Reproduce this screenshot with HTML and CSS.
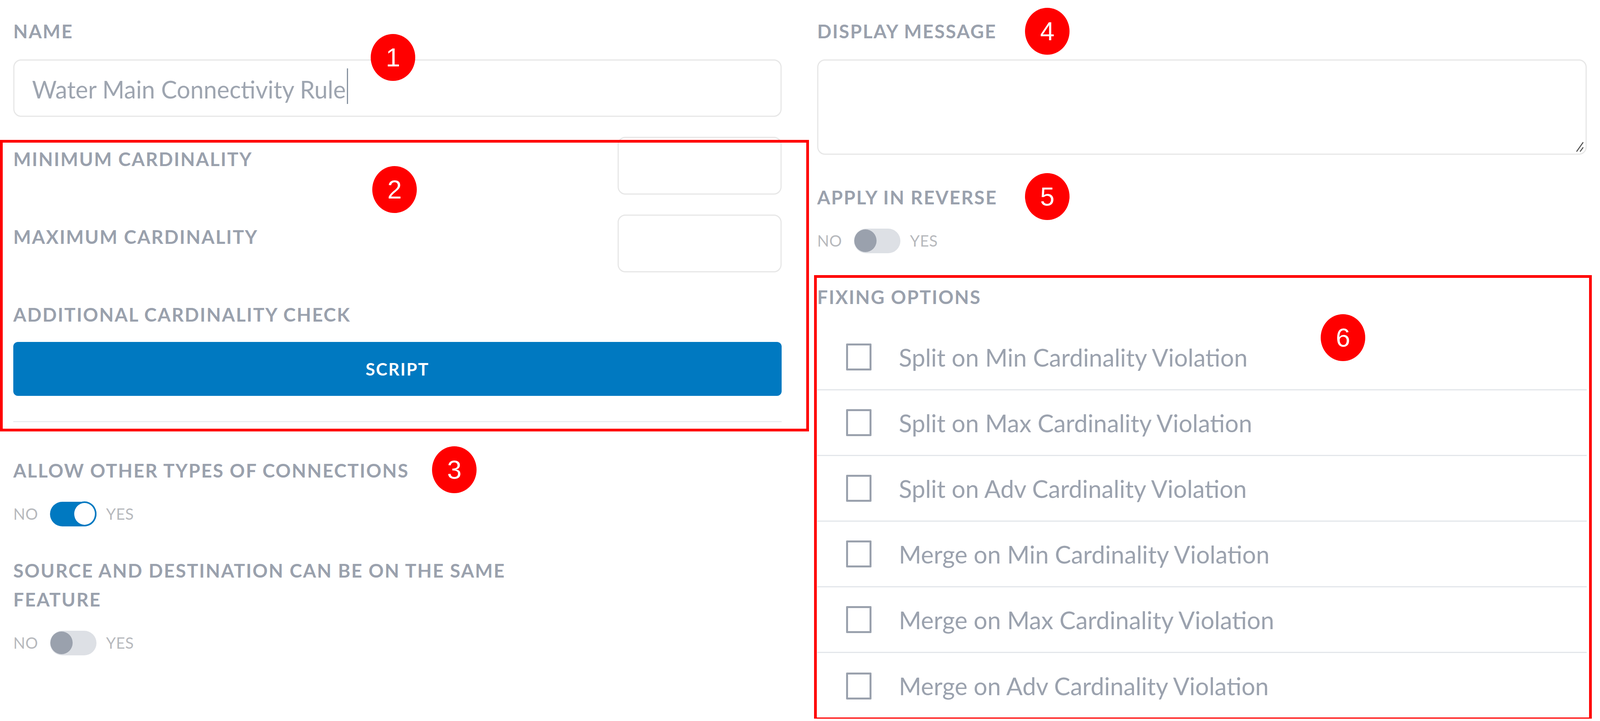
FILE: index.html
```html
<!DOCTYPE html>
<html lang="en">
<head>
<meta charset="utf-8">
<title>Connectivity Rule</title>
<link rel="stylesheet" href="styles.css">
</head>
<body>
<div class="page">
  <div class="col col-left">
    <div class="label">NAME</div>
    <div class="text-input name-input"><span class="value">Water Main Connectivity Rule</span><span class="caret"></span></div>

    <section class="cardinality">
      <div class="card-row">
        <div class="label">MINIMUM CARDINALITY</div>
        <div class="text-input small-input"></div>
      </div>
      <div class="card-row second">
        <div class="label">MAXIMUM CARDINALITY</div>
        <div class="text-input small-input"></div>
      </div>
      <div class="label additional">ADDITIONAL CARDINALITY CHECK</div>
      <button class="script-btn">SCRIPT</button>
      <div class="divider"></div>
      <div class="annot-box box-two"></div>
    </section>

    <div class="label after-divider">ALLOW OTHER TYPES OF CONNECTIONS</div>
    <div class="toggle-row">
      <span class="tog-text">NO</span>
      <span class="toggle on"><span class="knob"></span></span>
      <span class="tog-text yes">YES</span>
    </div>

    <div class="label wrap-label">SOURCE AND DESTINATION CAN BE ON THE SAME FEATURE</div>
    <div class="toggle-row">
      <span class="tog-text">NO</span>
      <span class="toggle"><span class="knob"></span></span>
      <span class="tog-text yes">YES</span>
    </div>

    <div class="badge b1">1</div>
    <div class="badge b2">2</div>
    <div class="badge b3">3</div>
  </div>

  <div class="col col-right">
    <div class="label">DISPLAY MESSAGE</div>
    <div class="textarea-wrap">
      <textarea class="message"></textarea>
      <svg class="grip" width="22" height="30" viewBox="0 0 22 30"><line x1="3" y1="28" x2="20" y2="4" stroke="#4a4a4a" stroke-width="2.5"/><line x1="12" y1="28" x2="20" y2="17" stroke="#4a4a4a" stroke-width="2.5"/></svg>
    </div>

    <div class="label reverse-label">APPLY IN REVERSE</div>
    <div class="toggle-row">
      <span class="tog-text">NO</span>
      <span class="toggle"><span class="knob"></span></span>
      <span class="tog-text yes">YES</span>
    </div>

    <section class="fixing">
      <div class="label">FIXING OPTIONS</div>
      <ul class="options">
        <li class="option"><span class="checkbox"></span><span class="opt-text">Split on Min Cardinality Violation</span></li>
        <li class="option"><span class="checkbox"></span><span class="opt-text">Split on Max Cardinality Violation</span></li>
        <li class="option"><span class="checkbox"></span><span class="opt-text">Split on Adv Cardinality Violation</span></li>
        <li class="option"><span class="checkbox"></span><span class="opt-text">Merge on Min Cardinality Violation</span></li>
        <li class="option"><span class="checkbox"></span><span class="opt-text">Merge on Max Cardinality Violation</span></li>
        <li class="option"><span class="checkbox"></span><span class="opt-text">Merge on Adv Cardinality Violation</span></li>
      </ul>
      <div class="annot-box box-six"></div>
    </section>

    <div class="badge b4">4</div>
    <div class="badge b5">5</div>
    <div class="badge b6">6</div>
  </div>
</div>
</body>
</html>
```

FILE: styles.css
```css
* { box-sizing: border-box; }

html, body {
  margin: 0;
  padding: 0;
  background: #ffffff;
}

body {
  font-family: Lato, "Open Sans", "Liberation Sans", sans-serif;
}

.page {
  width: 100%;
  display: grid;
  grid-template-columns: 1967fr 1970fr;
  column-gap: 91px;
  padding: 43px 34px 0 34px;
  align-items: start;
}

.col {
  position: relative;
  display: flex;
  flex-direction: column;
  min-width: 0;
}

.label {
  font-size: 48px;
  line-height: 74px;
  font-weight: 700;
  letter-spacing: 2.5px;
  color: #9aa1ad;
  text-transform: uppercase;
  white-space: nowrap;
}

.text-input {
  border: 3px solid #e7e7e7;
  border-radius: 20px;
  background: #ffffff;
}

.name-input {
  margin-top: 35px;
  height: 147px;
  display: flex;
  align-items: center;
  padding-left: 45px;
  font-size: 61px;
  color: #9ea5b0;
}

.name-input .value {
  padding-top: 6px;
}

.caret {
  display: inline-block;
  width: 3px;
  height: 91px;
  margin-left: 3px;
  margin-top: -10px;
  background: #8792a0;
}

.cardinality {
  position: relative;
  margin-top: 51px;
  display: flex;
  flex-direction: column;
}

.card-row {
  display: flex;
  justify-content: space-between;
  align-items: flex-start;
}

.card-row .label {
  margin-top: 20px;
}

.card-row.second {
  margin-top: 51px;
}

.small-input {
  width: 420px;
  height: 148px;
}

.additional {
  margin-top: 71px;
}

.script-btn {
  margin-top: 33px;
  height: 138px;
  width: 100%;
  border: none;
  border-radius: 12px;
  background: #0079c1;
  color: #ffffff;
  font-family: Lato, "Open Sans", "Liberation Sans", sans-serif;
  font-size: 44px;
  font-weight: 700;
  letter-spacing: 2.5px;
  padding: 0;
}

.divider {
  margin-top: 65px;
  height: 2px;
  background: #e3e5e9;
}

.after-divider {
  margin-top: 87px;
}

.toggle-row {
  margin-top: 42px;
  height: 64px;
  display: flex;
  align-items: center;
}

.tog-text {
  font-size: 40px;
  font-weight: 400;
  color: #b7b9bd;
  letter-spacing: 0.5px;
  margin-right: 30px;
}

.tog-text.yes {
  margin-right: 0;
  margin-left: 25px;
}

.toggle {
  width: 119px;
  height: 63px;
  border-radius: 32px;
  background: #dde0e5;
  display: inline-flex;
  align-items: center;
}

.toggle .knob {
  width: 57px;
  height: 58px;
  border-radius: 50%;
  background: #9aa1ad;
  margin-left: 1px;
}

.toggle.on {
  background: #0079c1;
  justify-content: flex-end;
}

.toggle.on .knob {
  width: 61px;
  height: 64px;
  margin-left: 0;
  background: #ffffff;
  border: 4px solid #0079c1;
}

.wrap-label {
  margin-top: 76px;
  white-space: normal;
  max-width: 1360px;
}

.textarea-wrap {
  position: relative;
  margin-top: 35px;
  height: 244px;
}

.message {
  display: block;
  width: 100%;
  height: 100%;
  border: 3px solid #e7e7e7;
  border-radius: 20px;
  resize: none;
  outline: none;
  background: #ffffff;
}

.grip {
  position: absolute;
  right: 7px;
  bottom: 6px;
}

.reverse-label {
  margin-top: 72px;
}

.fixing {
  position: relative;
  margin-top: 75px;
}

.options {
  list-style: none;
  margin: 34px 0 0 0;
  padding: 0;
}

.option {
  height: 168px;
  display: flex;
  align-items: center;
  padding-left: 74px;
  border-bottom: 3px solid #e3e6ea;
}

.option:last-child {
  border-bottom: none;
}

.checkbox {
  width: 65px;
  height: 69px;
  border: 5px solid #9aa1ad;
  border-radius: 2px;
  flex: none;
}

.opt-text {
  margin-left: 70px;
  font-size: 62px;
  color: #9ba2ae;
}

.annot-box {
  position: absolute;
  border: 7px solid #ff0000;
  pointer-events: none;
}

.box-two {
  left: -34px;
  right: -70px;
  top: 8px;
  bottom: -24px;
}

.box-six {
  left: -8px;
  right: -13px;
  top: -19px;
  bottom: -4px;
}

.badge {
  position: absolute;
  width: 114px;
  height: 120px;
  border-radius: 50%;
  background: #ff0000;
  color: #ffffff;
  font-family: "Liberation Sans", Arial, sans-serif;
  font-size: 66px;
  display: flex;
  align-items: center;
  justify-content: center;
}

.b1 { left: 915px; top: 44px; }
.b2 { left: 919px; top: 382px; }
.b3 { left: 1072px; top: 1099px; }
.b4 { left: 532px; top: -23px; }
.b5 { left: 532px; top: 400px; }
.b6 { left: 1289px; top: 761px; }
```
